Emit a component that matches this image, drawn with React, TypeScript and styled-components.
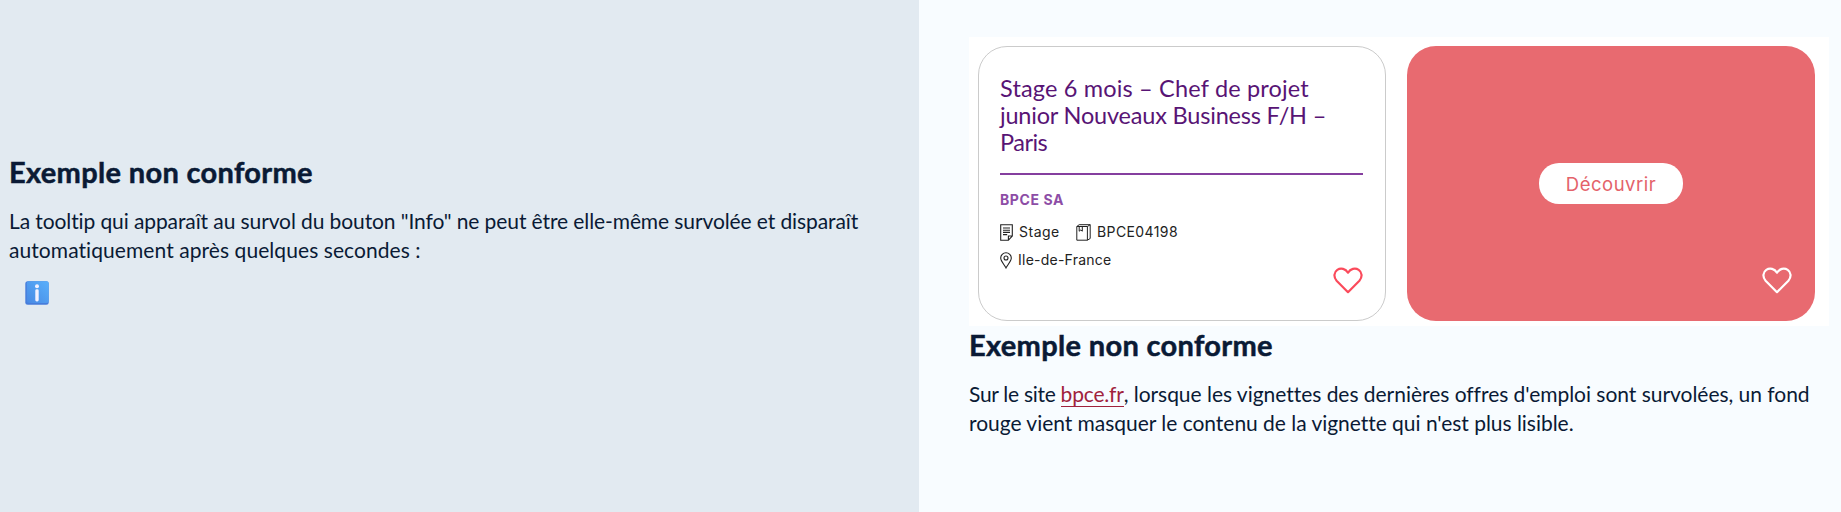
import React from 'react';
import styled, { createGlobalStyle } from 'styled-components';

const GlobalStyle = createGlobalStyle`
  *, *::before, *::after { box-sizing: border-box; }
  body { margin: 0; font-family: Lato, sans-serif; color: #0a1a35; }
  h2, h3, p { margin: 0; }
`;

const Page = styled.main`
  display: grid;
  grid-template-columns: 919px 1fr;
  height: 512px;
  overflow: hidden;
`;

const TooltipPanel = styled.section`
  background: #e2eaf1;
  padding: 153px 9px 0;
`;

const VignettePanel = styled.section`
  background: #f8fcff;
  padding: 37px 12px 0 50px;
`;

const Heading = styled.h2`
  font-size: 29px;
  font-weight: 700;
  line-height: 38px;
  letter-spacing: 0.33px;
  -webkit-text-stroke: 0.5px currentColor;
`;

const Paragraph = styled.p`
  margin-top: 15px;
  font-size: 21px;
  line-height: 29px;
  white-space: nowrap;
`;

const Line = styled.span<{ $tracking: number }>`
  display: block;
  letter-spacing: ${(p) => p.$tracking}px;
`;

const Run = styled.span<{ $tracking: number }>`
  letter-spacing: ${(p) => p.$tracking}px;
`;

const SiteLink = styled.a`
  color: #a0223c;
  letter-spacing: -0.2px;
  text-decoration: none;
  border-bottom: 1px solid #a0223c;
`;

const InfoButton = styled.button`
  display: block;
  width: 24px;
  height: 24px;
  margin: 17px 0 0 16px;
  padding: 0;
  border: 0;
  background: none;

  svg { display: block; }
`;

const Vignettes = styled.div`
  display: flex;
  gap: 21px;
  width: 860px;
  height: 289px;
  padding: 9px 0 0 9px;
  background: #fff;
`;

const OfferCard = styled.article`
  display: flex;
  flex-direction: column;
  position: relative;
  width: 408px;
  height: 275px;
  padding: 28px 22px 0 21px;
  border: 1px solid #cbcbcb;
  border-radius: 29px;
  background: #fff;
`;

const HoveredCard = styled.article`
  display: flex;
  align-items: center;
  justify-content: center;
  position: relative;
  width: 408px;
  height: 275px;
  border-radius: 29px;
  background: #e86a70;
`;

const OfferTitle = styled.h3`
  height: 100px;
  border-bottom: 2px solid #853f9f;
  color: #581475;
  font-size: 23.5px;
  font-weight: 400;
  line-height: 27px;
  white-space: nowrap;
`;

const Company = styled.p`
  margin-top: 15px;
  color: #8d4da6;
  font: 700 14px/20px Inter, sans-serif;
  letter-spacing: 0.6px;
`;

const MetaRow = styled.div<{ $top: number }>`
  display: flex;
  align-items: center;
  height: 20px;
  margin-top: ${(p) => p.$top}px;
`;

const Meta = styled.span<{ $tracking: number; $width?: number; $gap: number }>`
  display: flex;
  align-items: center;
  gap: ${(p) => p.$gap}px;
  width: ${(p) => (p.$width ? `${p.$width}px` : 'auto')};
  color: #222;
  font: 400 14px/20px Inter, sans-serif;
  letter-spacing: ${(p) => p.$tracking}px;
  white-space: nowrap;
`;

const HeartBadge = styled.span`
  display: block;
  position: absolute;
  right: 22px;
  bottom: 26px;
  width: 30px;
  height: 27px;

  ${HoveredCard} & { right: 23px; bottom: 27px; }

  svg { display: block; }
`;

const Discover = styled.button`
  width: 144px;
  height: 41px;
  padding: 0;
  border: 0;
  border-radius: 20px;
  background: #fff;
  color: #e4626a;
  font: 400 18.5px/24px Inter, sans-serif;
  letter-spacing: 0.5px;
`;

const Heart = ({ color }: { color: string }) => (
  <svg width="30" height="27" viewBox="0 0 30 27" fill="none" stroke={color} strokeWidth="2.2" strokeLinejoin="round">
    <path d="M15 25.2 3.6 13.7C.4 10.2.8 5.1 4.3 2.8 7.9.4 12.6 1.7 15 5.7 17.4 1.7 22.1.4 25.7 2.8 29.2 5.1 29.6 10.2 26.4 13.7Z" />
  </svg>
);

const DocumentIcon = () => (
  <svg width="13" height="17" viewBox="0 0 13 17" fill="none" stroke="#222" strokeWidth="1.1">
    <path d="M.7.8H12.3V12L8.4 16.2H.7Z M12.3 12H8.4V16.2" />
    <path d="M3 4H10 M3 6.2H10 M3 8.4H10 M3 10.6H7.2" />
  </svg>
);

const BookIcon = () => (
  <svg width="15" height="17" viewBox="0 0 15 17" fill="none" stroke="#222">
    <path d="M.8 2.5H11.4V16.2H.8Z M.8 2.5 3.2.7H14.2V14.5L11.4 16.2 M11.4 2.5 14.2.7" />
    <path d="M3.2 2.5V7.2L4.8 6 6.3 7.2V2.5" />
  </svg>
);

const PinIcon = () => (
  <svg width="12" height="17" viewBox="0 0 12 17" fill="none" stroke="#222" strokeWidth="1.1">
    <path d="M6 15.9C5 13.4.7 9.5.7 6A5.3 5.2 0 0 1 11.3 6C11.3 9.5 7 13.4 6 15.9Z" />
    <circle cx="6" cy="6" r="2" />
  </svg>
);

const InfoIcon = () => (
  <svg width="24" height="24" viewBox="0 0 24 24">
    <defs>
      <linearGradient id="info-face" x1="0" y1="1" x2="1" y2="0">
        <stop offset="0" stopColor="#4889e4" />
        <stop offset="1" stopColor="#59b0fb" />
      </linearGradient>
    </defs>
    <rect x=".3" y=".3" width="23.4" height="23.4" rx="2.5" fill="#477ddb" />
    <rect x="1.8" y=".3" width="21.9" height="21.7" rx="2" fill="url(#info-face)" />
    <circle cx="12" cy="5.2" r="2" fill="#f3f1ff" />
    <rect x="10.3" y="8.3" width="3.4" height="12.2" rx="1.4" fill="#f3f1ff" />
  </svg>
);

export default function App() {
  return (
    <>
      <GlobalStyle />
      <Page>
        <TooltipPanel>
          <Heading>Exemple non conforme</Heading>
          <Paragraph>
            <Line $tracking={-0.1}>
              La tooltip qui apparaît au survol du bouton "Info" ne peut être elle-même survolée et disparaît
            </Line>
            <Line $tracking={0.07}>automatiquement après quelques secondes :</Line>
          </Paragraph>
          <InfoButton aria-label="Info">
            <InfoIcon />
          </InfoButton>
        </TooltipPanel>

        <VignettePanel>
          <Vignettes>
            <OfferCard>
              <OfferTitle>
                <Line $tracking={0.17}>Stage 6 mois – Chef de projet</Line>
                <Line $tracking={-0.19}>junior Nouveaux Business F/H –</Line>
                <Line $tracking={-0.5}>Paris</Line>
              </OfferTitle>
              <Company>BPCE SA</Company>
              <MetaRow $top={12}>
                <Meta $tracking={0.5} $width={76} $gap={6}>
                  <DocumentIcon />
                  Stage
                </Meta>
                <Meta $tracking={0.4} $gap={6}>
                  <BookIcon />
                  BPCE04198
                </Meta>
              </MetaRow>
              <MetaRow $top={8}>
                <Meta $tracking={0.24} $gap={6}>
                  <PinIcon />
                  Ile-de-France
                </Meta>
              </MetaRow>
              <HeartBadge>
                <Heart color="#fb4a5b" />
              </HeartBadge>
            </OfferCard>
            <HoveredCard>
              <Discover>Découvrir</Discover>
              <HeartBadge>
                <Heart color="#fff" />
              </HeartBadge>
            </HoveredCard>
          </Vignettes>
          <Heading>Exemple non conforme</Heading>
          <Paragraph>
            <Line $tracking={0}>
              <Run $tracking={-0.28}>Sur le site </Run>
              <SiteLink>bpce.fr</SiteLink>
              <Run $tracking={-0.03}>
                , lorsque les vignettes des dernières offres d'emploi sont survolées, un fond
              </Run>
            </Line>
            <Line $tracking={-0.03}>rouge vient masquer le contenu de la vignette qui n'est plus lisible.</Line>
          </Paragraph>
        </VignettePanel>
      </Page>
    </>
  );
}
